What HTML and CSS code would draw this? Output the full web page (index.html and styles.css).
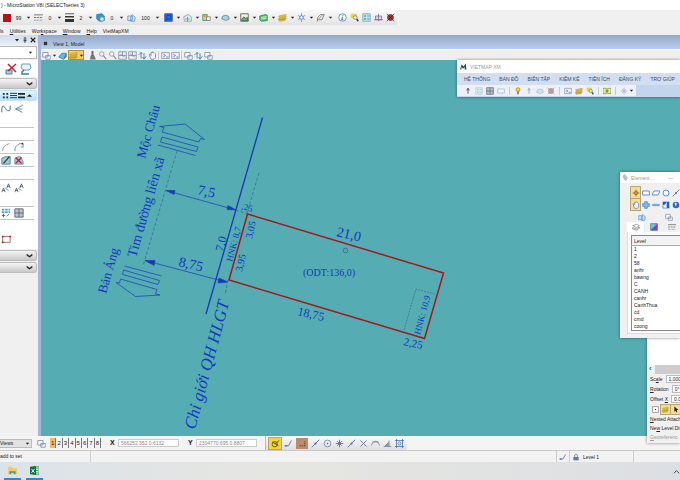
FILE: index.html
```
<!DOCTYPE html>
<html lang="vi">
<head>
<meta charset="utf-8">
<title>MicroStation V8i (SELECTseries 3)</title>
<link rel="stylesheet" href="styles.css">
</head>
<body>
<svg class="defs" aria-hidden="true">
  <symbol id="styl" viewBox="0 0 12 12"><path d="M0 2.500h12" stroke="#555"/><path d="M0 6h12" stroke="#555" stroke-dasharray="3 1"/><path d="M0 9.500h12" stroke="#555" stroke-dasharray="1 1"/></symbol>
  <symbol id="wt" viewBox="0 0 12 12"><path d="M0 1h12" stroke="#333"/><path d="M0 5h12" stroke="#333" stroke-width="2"/><path d="M0 10h12" stroke="#333" stroke-width="4"/></symbol>
  <symbol id="cube" viewBox="0 0 12 12"><path d="M1 2l7-1 3 3v6l-6 1-4-3z" fill="#3197c9" stroke="#25789f"/><circle cx="8" cy="8" r="3" fill="#d5eef8" stroke="#489"/></symbol>
  <symbol id="trans" viewBox="0 0 12 12"><path d="M1 4h6v6H1zM5 6l2-4 4 4-1 5H5z" fill="#cfe3f6" stroke="#5b8fc8"/></symbol>
  <symbol id="blue" viewBox="0 0 12 12"><path d="M1 1h10v10H1z" fill="#2c6ce0" stroke="#163f9e"/><path d="M4 3h5v5H4z" fill="none" stroke="#123f93"/><path d="M1 11l3-3" stroke="#123f93"/></symbol>
  <symbol id="sheet" viewBox="0 0 12 12"><path d="M1 5l6-3 4 3v6H2z" fill="#e3eef0" stroke="#7c9ba0"/><path d="M3 8h6M6 5v6" stroke="#2aa39a"/></symbol>
  <symbol id="models" viewBox="0 0 12 12"><path d="M1 2h6v8H1z" fill="#b6dba9" stroke="#4c8a56"/><path d="M6 5h5v5H6z" fill="#f4f4ef" stroke="#777"/><path d="M2 4h5" stroke="#e88b42" stroke-width="2"/></symbol>
  <symbol id="split" viewBox="0 0 12 12"><path d="M0 2h5v8H0zM7 2h5v8H7z" fill="#e9ef8a" stroke="#7f8a3a"/><path d="M4 6h4" stroke="#444"/></symbol>
  <symbol id="cloud" viewBox="0 0 12 12"><path d="M1 8q0-5 5-5t5 5l-4 2z" fill="#a9d4e2" stroke="#4d8297"/></symbol>
  <symbol id="pic" viewBox="0 0 12 12"><path d="M1 1h10v10H1z" fill="#f5f4d9" stroke="#444"/><path d="M2 9l3-4 2 2 3-1v4H2z" fill="#67ae68" stroke="#456"/></symbol>
  <symbol id="green" viewBox="0 0 12 12"><path d="M1 4l8-2 2 1v7l-8 1-2-2z" fill="#59c66c" stroke="#218047"/><path d="M3 6l7-1M3 8l7-1" stroke="#e7ffe5"/></symbol>
  <symbol id="layers" viewBox="0 0 12 12"><path d="M1 4l4-1 6-1-2 3-7 1zM1 7l8-1 2-2-2 4-8 1zM1 9l8-1 2-1-2 3-7 1z" fill="#e7c541" stroke="#a78d28" stroke-width=".7"/></symbol>
  <symbol id="leaf" viewBox="0 0 12 12"><path d="M1 4l6-2 4 2-4 3zM1 7l6 2 4-3v2l-4 3-6-2z" fill="#fff" stroke="#777"/></symbol>
  <symbol id="star" viewBox="0 0 12 12"><path d="M6 0v12M1 3l10 6M11 3L1 9" stroke="#5c9ec0"/><circle cx="6" cy="6" r="2.500" fill="#d9eef7" stroke="#3d78ad"/></symbol>
  <symbol id="draw" viewBox="0 0 12 12"><circle cx="5" cy="7" r="3.500" fill="none" stroke="#6b5a14" stroke-width="1.300"/><path d="M2 4l8 5M5 7l6-5" stroke="#6b5a14" stroke-width="1.300"/></symbol>
  <symbol id="pen" viewBox="0 0 12 12"><path d="M2 11V6l4-4h5L8 9H3" fill="#e1ece6" stroke="#587d72"/><path d="M1 11l8-9" stroke="#c56c60"/></symbol>
  <symbol id="clip" viewBox="0 0 12 12"><path d="M3 2l2-1 4 6-2 4-3-2-2-5z" fill="#ddd" stroke="#888"/><path d="M4 4l3 5" stroke="#888"/></symbol>
  <symbol id="info" viewBox="0 0 12 12"><circle cx="6" cy="6" r="5" fill="#f4faff" stroke="#4f80b7"/><path d="M6.500 2.500v1M6 5l-1 4h2" stroke="#2765b0" stroke-width="1.300" fill="none"/></symbol>
  <symbol id="find" viewBox="0 0 12 12"><path d="M1 1h8v6H1z" fill="#f0d23d"/><circle cx="7" cy="6" r="2.500" fill="#f3ecc1" stroke="#777"/><path d="M9 8l2 3" stroke="#345" stroke-width="2"/></symbol>
  <symbol id="list" viewBox="0 0 12 12"><path d="M1 1h10v10H1z" fill="#bfe2ec" stroke="#6fa7bb"/><path d="M3 3h2v2H3zM3 7h2v2H3z" fill="#35a15b"/><path d="M7 4h3M7 8h3" stroke="#477aaf"/></symbol>
  <symbol id="key" viewBox="0 0 12 12"><path d="M2 4h8v5H2z" fill="#dfd5ee" stroke="#7b6b9a"/><path d="M6 1v10M0 9h12" stroke="#7b6b9a"/></symbol>
  <symbol id="bug" viewBox="0 0 12 12"><circle cx="6" cy="6" r="4" fill="#a5333a" stroke="#444"/><path d="M1 1l10 10M11 1L1 11" stroke="#5b1a24"/></symbol>
  <symbol id="win" viewBox="0 0 12 12"><path d="M1 2h7v6H1zM5 6h6v5H5z" fill="#f6f9ff" stroke="#7c8698"/></symbol>
  <symbol id="ball" viewBox="0 0 12 12"><path d="M1 8l4-5h6v5l-4 3z" fill="#6db7d4" stroke="#3f7793"/><path d="M8 10l3-6" stroke="#2e6276"/></symbol>
  <symbol id="brush" viewBox="0 0 12 12"><path d="M5 0h2v6H5zM3 11l1-5h4l2 5z" fill="#777" stroke="#555" stroke-width=".5"/></symbol>
  <symbol id="zoom" viewBox="0 0 12 12"><circle cx="5" cy="4" r="3" fill="#edf4fb" stroke="#8093ad"/><path d="M7 6l4 5" stroke="#9b765e" stroke-width="1.500"/></symbol>
  <symbol id="fit" viewBox="0 0 12 12"><path d="M1 1h10v10H1zM1 6h10M6 1v6M3 4l6 4" fill="none" stroke="#77859b"/></symbol>
  <symbol id="rot" viewBox="0 0 12 12"><path d="M4 2v8M1 5l3-3 2 2M8 10V3M6 8l2 3 3-4" fill="none" stroke="#4580bd" stroke-width="1.200"/></symbol>
  <symbol id="hand" viewBox="0 0 12 12"><path d="M2 6V4l2 2V2h2V1l2 1 2 2v5l-2 2H4z" fill="#f4f6ff" stroke="#6074ac"/></symbol>
  <symbol id="prev" viewBox="0 0 12 12"><path d="M1 2h10v8H1z" fill="#eef2f8" stroke="#8490a4"/><path d="M3 4l3 2-3 2M7 8h3" fill="none" stroke="#536d97"/></symbol>
  <symbol id="x" viewBox="0 0 12 12"><path d="M1 7h6v4H1z" fill="#a9cbe0" stroke="#4f7fa6"/><path d="M3 1l8 8M11 1L3 8" stroke="#c3222c" stroke-width="1.500"/></symbol>
  <symbol id="delv" viewBox="0 0 12 12"><path d="M1 4l4-2h3l3 6v3H1z" fill="#a9c4d8" stroke="#6f8fa6"/><path d="M2 3l7 7M9 3L2 10" stroke="#b3222c" stroke-width="1.500"/></symbol>
  <symbol id="lasso" viewBox="0 0 12 12"><path d="M2 1h8l1 4-2 2H4L1 5z" fill="#eaf4fb" stroke="#6e9bc2"/><path d="M4 7L2 9v2h7" fill="none" stroke="#3f79a4" stroke-width="1.500"/></symbol>
  <symbol id="curve" viewBox="0 0 12 12"><path d="M1 10V5q1-5 4 0t6 2V2" fill="none" stroke="#587084" stroke-width="1.200"/></symbol>
  <symbol id="branch" viewBox="0 0 12 12"><path d="M11 1L2 6l8 4M2 6h8" fill="none" stroke="#5d8db3" stroke-width="1.200"/></symbol>
  <symbol id="arc" viewBox="0 0 12 12"><path d="M2 11q0-7 8-9" fill="none" stroke="#8b8b8b"/></symbol>
  <symbol id="arc2" viewBox="0 0 12 12"><path d="M1 11q0-7 6-9h4v4H8" fill="none" stroke="#777"/><circle cx="10" cy="2" r="1" fill="#333"/></symbol>
  <symbol id="edit" viewBox="0 0 12 12"><path d="M1 4l4-2h6v9H1z" fill="#a5c9dc" stroke="#527b92"/><path d="M3 10l7-8" stroke="#2c3c46" stroke-width="1.500"/></symbol>
  <symbol id="txt" viewBox="0 0 12 12"><path d="M1 11l2-5 2 5M2 9h3M7 6l2-5 2 5M7 4h3" fill="none" stroke="#555"/><path d="M5 6l4 3" stroke="#3d87bd"/></symbol>
  <symbol id="grid" viewBox="0 0 12 12"><path d="M1 1h10v10H1zM1 6h10M6 1v10" fill="#b9c1c9" stroke="#56616a"/></symbol>
  <symbol id="dots" viewBox="0 0 12 12"><path d="M1 2h10M1 5h10" stroke="#4ba4c9" stroke-width="2" stroke-dasharray="3 1"/><path d="M3 7v4M1 9h4M7 10l3-3" stroke="#456"/></symbol>
  <symbol id="poly" viewBox="0 0 12 12"><path d="M2 3h9v7H2z" fill="none" stroke="#8e5757"/><path d="M1 2h2v2H1zM10 2h2v2h-2zM1 9h2v2H1z" fill="#a22"/></symbol>
  <symbol id="line" viewBox="0 0 12 12"><path d="M1 11L11 1" stroke="#6279a8" stroke-width="1.300"/><circle cx="6" cy="6" r="1.500" fill="#58709e"/></symbol>
  <symbol id="hook" viewBox="0 0 12 12"><path d="M1 9h5l4-7" fill="none" stroke="#647ba5" stroke-width="1.300"/><path d="M1 8h3v2H1z" fill="#647ba5"/></symbol>
  <symbol id="keypt" viewBox="0 0 12 12"><path d="M2 9h7V3" fill="none" stroke="#6d4b3d" stroke-width="1.500" stroke-dasharray="2 1"/></symbol>
  <symbol id="circ" viewBox="0 0 12 12"><circle cx="6" cy="6" r="4.500" fill="none" stroke="#6279a8"/><circle cx="6" cy="6" r="1" fill="#435d8d"/></symbol>
  <symbol id="ring" viewBox="0 0 12 12"><circle cx="6" cy="6" r="4.500" fill="#fff" stroke="#4d80c3" stroke-width="1.300"/></symbol>
  <symbol id="cross" viewBox="0 0 12 12"><path d="M2 2l8 8M10 2l-8 8" stroke="#6c7a92" stroke-width="1.300"/></symbol>
  <symbol id="burst" viewBox="0 0 12 12"><path d="M6 1v10M1 6h10M3 3l6 6M9 3L3 9" stroke="#5b7097" stroke-width="1.200"/></symbol>
  <symbol id="bow" viewBox="0 0 12 12"><path d="M0 9l3-5q3-2 6 0l3 5M2 4h8" fill="none" stroke="#697b99"/></symbol>
  <symbol id="perp" viewBox="0 0 12 12"><path d="M1 10h10M8 10V2M3 9l4-4v4z" fill="#99a5b8" stroke="#697b99"/></symbol>
  <symbol id="frame" viewBox="0 0 12 12"><path d="M2 2h8v8H2z" fill="none" stroke="#496fb2"/><path d="M0 2h3M2 0v3M9 2h3M10 0v3M0 10h3M2 9v3M9 10h3M10 9v3" stroke="#496fb2"/><circle cx="6" cy="6" r="2" fill="none" stroke="#496fb2"/></symbol>
  <symbol id="point" viewBox="0 0 12 12"><path d="M1 1h10v10H1z" fill="#fff" stroke="#666"/><path d="M5 5h2v2H5z" fill="#333"/></symbol>
  <symbol id="box" viewBox="0 0 12 12"><path d="M1 3h10v6H1z" fill="#fff" stroke="#4d80c3" stroke-width="1.300"/></symbol>
  <symbol id="para" viewBox="0 0 12 12"><path d="M3 3h9L9 9H0z" fill="#fff" stroke="#4d80c3" stroke-width="1.300"/></symbol>
  <symbol id="plus" viewBox="0 0 12 12"><path d="M4 1h4v3h3v4H8v3H4V8H1V4h3z" fill="#88b8e6" stroke="#437ab5"/></symbol>
  <symbol id="pick" viewBox="0 0 12 12"><path d="M6 1v10M1 6h10" stroke="#a1681f" stroke-width="1.500"/><path d="M4 4h4v4H4z" fill="#e5a443" stroke="#8a5a22"/></symbol>
  <symbol id="minus" viewBox="0 0 12 12"><path d="M1 5h10v2H1z" fill="#9dc3e8" stroke="#5588bb"/></symbol>
  <symbol id="half" viewBox="0 0 12 12"><path d="M1 1h10v10H1z" fill="#1b61b8"/><path d="M2 10V6q4 0 4-4h1v8z" fill="#fff"/></symbol>
  <symbol id="globe" viewBox="0 0 12 12"><circle cx="6" cy="6" r="5" fill="#2b70bd"/><path d="M4 3q4-2 3 3L5 8z" fill="#c4e2f8"/></symbol>
  <symbol id="rain" viewBox="0 0 12 12"><path d="M1 1h10v10H1z" fill="#80a8f0" stroke="#376"/><path d="M1 11L11 1v10z" fill="#7b44c7"/><path d="M2 2h4v4H2z" fill="#63d49b"/></symbol>
  <symbol id="bulb" viewBox="0 0 12 12"><circle cx="6" cy="4" r="3" fill="#f5cf2c" stroke="#a08427"/><path d="M5 7h2v4H5z" fill="#555"/></symbol>
  <symbol id="arrow" viewBox="0 0 12 12"><path d="M6 10V2M4 5l2-3 2 3" fill="none" stroke="#335" stroke-width="1.200"/></symbol>
  <symbol id="cursor" viewBox="0 0 12 12"><path d="M4 1v9l2-2 2 3 1-1-1-3h3z" fill="#222"/></symbol>
  <symbol id="logo" viewBox="0 0 12 12"><path d="M0 11L3 2l3 4 4-5 1 10H8V7l-3 3-2-3-1 4z" fill="#17526c"/></symbol>
  <symbol id="lock" viewBox="0 0 12 12"><path d="M4 6V3q2-3 4 0v3" fill="none" stroke="#567"/><path d="M2 6h8v5H2z" fill="#667b92"/></symbol>
  <symbol id="folder" viewBox="0 0 12 12"><path d="M0 1h5l1 2h6v8H0z" fill="#f3cf5a"/><path d="M2 7h8v4H8V9H4v2H2z" fill="#3f8fc7"/></symbol>
  <symbol id="excel" viewBox="0 0 12 12"><path d="M5 1h7v10H5z" fill="#eef7f0" stroke="#2a8453"/><path d="M8 3h3M8 6h3M8 9h3" stroke="#2a8453"/><path d="M0 1l8-1v12l-8-1z" fill="#147042"/><path d="M2 4l4 5M6 4L2 9" stroke="#fff" stroke-width="1.200"/></symbol>
  <symbol id="dn" viewBox="0 0 6 6"><path d="M1 2h4L3 4.500z" fill="#222"/></symbol>
  <symbol id="chev" viewBox="0 0 8 8"><path d="M1 2.500l3 2 3-2v1.500L4 6 1 4z" fill="#222" stroke="#222" stroke-width=".5"/></symbol>
</svg>

<header class="title">) - MicroStation V8i (SELECTseries 3)</header>

<div class="attributes">
  <div class="strip">
    <button class="attr" aria-label="Color"><i class="swatch"></i><span>99</span><svg class="dn"><use href="#dn"/></svg></button>
    <button class="attr" aria-label="Line style"><svg><use href="#styl"/></svg><span>0</span><svg class="dn"><use href="#dn"/></svg></button>
    <button class="attr" aria-label="Line weight"><svg><use href="#wt"/></svg><span>2</span><svg class="dn"><use href="#dn"/></svg></button>
    <button class="attr" aria-label="Class"><svg><use href="#cube"/></svg><span>0</span><svg class="dn"><use href="#dn"/></svg></button>
    <button class="attr last" aria-label="Transparency"><svg><use href="#trans"/></svg><span>100</span><svg class="dn"><use href="#dn"/></svg></button>
    <button class="drop" aria-label="Models"><svg><use href="#blue"/></svg><svg class="dn"><use href="#dn"/></svg></button>
    <button class="drop" aria-label="References"><svg><use href="#sheet"/></svg><svg class="dn"><use href="#dn"/></svg></button>
    <button class="drop" aria-label="Raster"><svg><use href="#models"/></svg><svg class="dn"><use href="#dn"/></svg></button>
    <button class="drop" aria-label="Point clouds"><svg><use href="#cloud"/></svg><svg class="dn"><use href="#dn"/></svg></button>
    <button class="drop" aria-label="Images"><svg><use href="#pic"/></svg><svg class="dn"><use href="#dn"/></svg></button>
    <button class="drop" aria-label="Level manager"><svg><use href="#green"/></svg><svg class="dn"><use href="#dn"/></svg></button>
    <button class="drop" aria-label="Level display"><svg><use href="#layers"/></svg><svg class="dn"><use href="#dn"/></svg></button>
    <button class="drop" aria-label="Cells"><svg><use href="#star"/></svg><svg class="dn"><use href="#dn"/></svg></button>
    <button class="drop" aria-label="Auxiliary coordinates"><svg><use href="#pen"/></svg><svg class="dn"><use href="#dn"/></svg></button>
    <span class="tools wide">
      <button aria-label="Information"><svg><use href="#info"/></svg></button>
      <button aria-label="Find"><svg><use href="#find"/></svg></button>
      <button aria-label="Toggles"><svg><use href="#list"/></svg></button>
      <button aria-label="Key-in"><svg><use href="#key"/></svg></button>
      <button aria-label="Debug"><svg><use href="#bug"/></svg></button>
    </span>
  </div>
</div>

<nav class="menu">
  <a href="#">ls</a><a href="#"><u>U</u>tilities</a><a href="#">Wor<u>k</u>space</a><a href="#"><u>W</u>indow</a><a href="#"><u>H</u>elp</a><a href="#">VietMapXM</a>
</nav>

<main class="work">
  <aside class="tasks">
    <div class="tasks-head"><svg class="dn"><use href="#dn"/></svg><svg viewBox="0 0 6 8"><path d="M2 1h2v4H2zM1 5h4M3 5v3" fill="none" stroke="#333"/></svg><svg viewBox="0 0 8 8"><path d="M1 1l6 6M7 1L1 7" stroke="#222" stroke-width="1.500"/></svg></div>
    <button class="combo" aria-label="Task"><svg class="dn"><use href="#dn"/></svg></button>
    <div class="row main-row"><svg><use href="#x"/></svg><svg><use href="#lasso"/></svg></div>
    <button class="fold" aria-label="Tasks"><svg><use href="#chev"/></svg></button>
    <div class="fold open"><svg viewBox="0 0 8 8"><path d="M1 1h2v2H1zM5 1h2v2H5zM1 5h2v2H1zM5 5h2v2H5z" fill="#222"/></svg><svg viewBox="0 0 8 8"><path d="M0 1.500h8M0 4h8M0 6.500h8" stroke="#222"/></svg><svg viewBox="0 0 8 8"><path d="M0 1h8v2H0zM0 5h8v2H0z" fill="#222"/></svg><svg viewBox="0 0 8 8"><path d="M1 5.500l3-3 3 3z" fill="#222"/></svg></div>
    <div class="rows">
      <div class="row tall"><svg><use href="#curve"/></svg><svg><use href="#branch"/></svg></div>
      <div class="row"></div>
      <div class="row"><svg><use href="#arc"/></svg><svg><use href="#arc2"/></svg></div>
      <div class="row"><svg><use href="#edit"/></svg><svg><use href="#delv"/></svg></div>
      <div class="row"></div>
      <div class="row tall"><svg><use href="#txt"/></svg><svg><use href="#txt"/></svg></div>
      <div class="row"><svg><use href="#dots"/></svg><svg><use href="#grid"/></svg></div>
      <div class="row tall end"><svg><use href="#poly"/></svg></div>
    </div>
    <button class="fold" aria-label="Mesh"><svg><use href="#chev"/></svg></button>
    <button class="fold" aria-label="Surface"><svg><use href="#chev"/></svg></button>
  </aside>

  <section class="view">
    <div class="view-title"><svg viewBox="0 0 6 6"><path d="M1 1h4v4H1z" fill="#333"/></svg>View 1, Model</div>
    <div class="view-tools">
      <button aria-label="View attributes"><svg><use href="#win"/></svg></button><svg class="dn"><use href="#dn"/></svg>
      <button aria-label="Display style"><svg><use href="#ball"/></svg></button>
      <button class="hot" aria-label="Adjust"><svg><use href="#layers"/></svg><svg class="dn"><use href="#dn"/></svg></button>
      <span class="tools">
        <button aria-label="Update"><svg><use href="#brush"/></svg></button>
        <button aria-label="Zoom in"><svg><use href="#zoom"/></svg></button>
        <button aria-label="Zoom out"><svg><use href="#zoom"/></svg></button>
        <button aria-label="Window area"><svg><use href="#fit"/></svg></button>
        <button aria-label="Fit view"><svg><use href="#fit"/></svg></button>
        <button aria-label="Rotate"><svg><use href="#rot"/></svg></button>
        <button aria-label="Pan"><svg><use href="#hand"/></svg></button>
      </span>
      <span class="tools">
        <button aria-label="Previous"><svg><use href="#prev"/></svg></button>
        <button aria-label="Next"><svg><use href="#prev"/></svg></button>
      </span>
      <span class="tools">
        <button aria-label="Copy view"><svg><use href="#win"/></svg></button>
        <button aria-label="Clip"><svg><use href="#rot"/></svg></button>
        <button aria-label="Mask"><svg><use href="#win"/></svg></button>
      </span>
    </div>
    <div class="canvas">
      <svg class="plan" viewBox="41 60 639 376" preserveAspectRatio="xMinYMin slice">
        <g class="ink">
          <path class="strong" d="M262.500 117.500L206 314"/>
          <path d="M166 190.500L236 210M145 260.500L226 282"/>
          <path class="fill" d="M166 190.500l9 0-1 4zM236 210l-9-.5 1-4zM145 260.500l10 0-1 5zM228 282l-10 1 1-5z"/>
          <path d="M159.500 126.500L185 124l19.500 15.500-4-1-1.500 3.500L162 132l2-4.500zM162 137l36 10-1.500 4.500-36-9.500zM158 145l37.500 10.500"/>
          <path d="M124.500 266l37 10M123.500 270l36 10.500-1.500 4-35.500-10zM120.500 279l36.500 10.500-1.500 4.500 4.500 1-24.500 1.500-19.500-14 3.500 .5z"/>
          <path class="dash" d="M177 151L143 266M259 173L247 213M236 210l11 4M228 280l-3 15"/>
        </g>
        <path class="hatch" d="M404 330L416 289l19 5"/>
        <path class="parcel" d="M247.500 214L443.500 273 424.500 338.500 229 280z"/>
        <circle class="hatch-circle" cx="345.500" cy="250.500" r="2.300"/>
        <g class="labels">
          <text class="s13" transform="translate(145 159) rotate(-74)">Mộc Châu</text>
          <text class="s14" transform="translate(136 258) rotate(-74)">Tim đường liên xã</text>
          <text class="s13" transform="translate(106 294) rotate(-74)">Bản Ảng</text>
          <text class="s17" transform="translate(195 430) rotate(-75)">Chỉ giới QH HLGT</text>
          <text class="s14" transform="translate(197 194) rotate(13)">7,5</text>
          <text class="s14" transform="translate(178 266) rotate(13)">8,75</text>
          <text class="s14" transform="translate(336 236) rotate(13)">21,0</text>
          <text class="s12" transform="translate(297 315) rotate(13)">18,75</text>
          <text class="s11" transform="translate(403 345) rotate(12)">2,25</text>
          <text class="s10" transform="translate(303 276)">(ODT:136,0)</text>
          <text class="s9" transform="translate(420 335) rotate(-75)">HNK: 10,9</text>
          <text class="s9" transform="translate(232 262) rotate(-75)">HNK: 8,7</text>
          <text class="s12" transform="translate(223 252) rotate(-75)">7,0</text>
          <text class="s10" transform="translate(252 239) rotate(-77)">3,05</text>
          <text class="s10" transform="translate(242 272) rotate(-77)">3,95</text>
          <text class="s9" transform="translate(241 209) rotate(14)">,25</text>
        </g>
      </svg>
    </div>
  </section>
</main>

<div class="snap-bar">
  <button class="views">Views<svg class="dn"><use href="#dn"/></svg></button>
  <button class="cascade" aria-label="View groups"><svg><use href="#win"/></svg></button>
  <div class="nums"><button class="on">1</button><button>2</button><button>3</button><button>4</button><button>5</button><button>6</button><button>7</button><button>8</button></div>
  <label class="coord"><b>X</b><input value="566252.352 0.6132"></label>
  <label class="coord"><b>Y</b><input value="2304770.695 0.8807"></label>
  <span class="tools wide snaps">
    <button class="lit" aria-label="AccuDraw"><svg><use href="#draw"/></svg></button>
    <button aria-label="Nearest"><svg><use href="#hook"/></svg></button>
    <button class="brown" aria-label="Keypoint"><svg><use href="#keypt"/></svg></button>
    <button aria-label="Midpoint"><svg><use href="#line"/></svg></button>
    <button aria-label="Center"><svg><use href="#circ"/></svg></button>
    <button aria-label="Origin"><svg><use href="#burst"/></svg></button>
    <button aria-label="Bisector"><svg><use href="#line"/></svg></button>
    <button aria-label="Intersection"><svg><use href="#cross"/></svg></button>
    <button aria-label="Tangent"><svg><use href="#bow"/></svg></button>
    <button aria-label="Perpendicular"><svg><use href="#perp"/></svg></button>
    <button aria-label="Multi-snap"><svg><use href="#frame"/></svg></button>
  </span>
</div>

<footer class="status">
  <span class="msg">add to set</span>
  <span class="space"></span>
  <span class="snap"><svg><use href="#hook"/></svg></span>
  <span class="level"><svg><use href="#lock"/></svg>Level 1</span>
  <span class="rest"></span>
</footer>

<div class="taskbar">
  <button aria-label="Explorer"><svg><use href="#folder"/></svg></button>
  <button aria-label="Excel"><svg><use href="#excel"/></svg></button>
  <svg class="tray" viewBox="0 0 8 8"><path d="M1 6l3-3 3 3" fill="none" stroke="#333"/></svg>
</div>

<section class="window vietmap">
  <div class="vm-title"><svg><use href="#logo"/></svg>VIETMAP XM</div>
  <nav class="vm-menu"><a href="#">HỆ THỐNG</a><a href="#">BẢN ĐỒ</a><a href="#">BIÊN TẬP</a><a href="#">KIỂM KÊ</a><a href="#">TIỆN ÍCH</a><a href="#">ĐĂNG KÝ</a><a href="#">TRỢ GIÚP</a></nav>
  <div class="vm-bar">
    <div class="vm-tools">
      <span class="tools wide"><button aria-label="Up"><svg><use href="#arrow"/></svg></button><button class="dim" aria-label="Sheet"><svg><use href="#list"/></svg></button><button aria-label="Table"><svg><use href="#grid"/></svg></button><button class="dim" aria-label="Page"><svg><use href="#box"/></svg></button></span>
      <span class="tools wide"><button aria-label="Light"><svg><use href="#bulb"/></svg></button><button class="dim" aria-label="Help"><svg><use href="#arrow"/></svg></button><button class="dim" aria-label="World"><svg><use href="#cloud"/></svg></button><button class="dim" aria-label="Delete"><svg><use href="#bug"/></svg></button></span>
      <span class="tools wide"><button aria-label="Label"><svg><use href="#prev"/></svg></button><button aria-label="Layers"><svg><use href="#layers"/></svg></button><button aria-label="Search"><svg><use href="#find"/></svg></button></span>
      <span class="tools"><button aria-label="Split"><svg><use href="#split"/></svg></button></span>
      <span class="tools"><button class="dim" aria-label="Points"><svg><use href="#burst"/></svg></button><svg class="dn"><use href="#dn"/></svg></span>
    </div>
  </div>
</section>

<section class="window raster">
  <div class="blank"></div>
  <div class="scroll">‹</div>
  <label><span>Sc<u>a</u>le</span><input value="1.000"></label>
  <label><span><u>R</u>otation</span><input value="0°"></label>
  <label><span>Offset <u>X</u></span><input value="0.0"></label>
  <div class="toggles"><button aria-label="Point"><svg><use href="#point"/></svg></button><button class="lit" aria-label="Display"><svg><use href="#layers"/></svg></button><button class="lit" aria-label="Locate"><svg><use href="#cursor"/></svg></button></div>
  <p><u>N</u>ested Attach</p>
  <p>Ne<u>w</u> Level Dis</p>
  <p class="off"><u>G</u>eoreferenc</p>
</section>

<section class="window element">
  <div class="el-title"><svg><use href="#clip"/></svg>Element ...<span>—</span></div>
  <div class="el-tools">
    <button class="lit" aria-label="Individual"><svg><use href="#pick"/></svg></button><button aria-label="Block"><svg><use href="#box"/></svg></button><button aria-label="Shape"><svg><use href="#para"/></svg></button><button aria-label="Circle"><svg><use href="#ring"/></svg></button><button aria-label="Line"><svg><use href="#line"/></svg></button>
    <button class="lit" aria-label="New"><svg><use href="#hand"/></svg></button><button aria-label="Add"><svg><use href="#plus"/></svg></button><button aria-label="Subtract"><svg><use href="#minus"/></svg></button><button aria-label="Invert"><svg><use href="#half"/></svg></button><button aria-label="All"><svg><use href="#globe"/></svg></button>
  </div>
  <div class="tabs upper"><button aria-label="Class"><svg><use href="#trans"/></svg></button><button aria-label="Type"><svg><use href="#win"/></svg></button></div>
  <div class="tabs"><button class="cur" aria-label="Level"><svg><use href="#leaf"/></svg></button><button aria-label="Color"><svg><use href="#rain"/></svg></button><button aria-label="Style"><svg><use href="#styl"/></svg></button></div>
  <div class="sheet">
    <table>
      <thead><tr><th>Level</th></tr></thead>
      <tbody>
        <tr><td>1</td></tr><tr><td>2</td></tr><tr><td>58</td></tr><tr><td>anhr</td></tr><tr><td>bawng</td></tr><tr><td>C</td></tr><tr><td>CANH</td></tr><tr><td>canhr</td></tr><tr><td>CanhThua</td></tr><tr><td>cd</td></tr><tr><td>cmd</td></tr><tr><td>coong</td></tr>
      </tbody>
    </table>
  </div>
</section>
</body>
</html>
```
FILE: styles.css
```
* { box-sizing: border-box; }
html, body { height: 100%; }
body {
  margin: 0;
  display: flex;
  flex-direction: column;
  position: relative;
  overflow: hidden;
  background: #f0f0f0;
  color: #222;
  font: 5px/8px "Liberation Sans", sans-serif;
}
button, input {
  font: inherit;
  color: inherit;
  margin: 0;
  padding: 0;
  border: 0;
  background: none;
}
button { display: flex; align-items: center; justify-content: center; }
a { color: inherit; text-decoration: none; }
p { margin: 0; }
svg { display: block; width: 9px; height: 9px; flex: none; }
.defs { position: absolute; width: 0; height: 0; }
svg.dn { width: 5px; height: 5px; }
.lit { background: #f6dc92; outline: 1px solid #b9a57a; }
.dim { opacity: .45; }

.title { height: 10px; line-height: 11px; padding-left: 1px; background: #fff; }

.attributes { display: flex; height: 15px; background: #f0f0f0; }
.strip {
  display: flex;
  align-items: center;
  padding: 0 2px 0 3px;
  background: linear-gradient(#fafafa, #e2e2e2);
}
.attr { width: 31px; gap: 2px; justify-content: flex-start; }
.attr span { flex: 1; text-align: center; }
.attr .dn { margin-right: 3px; }
.attr.last { width: 36px; }
.swatch { width: 8px; height: 8px; background: #b5121b; }
.drop { width: 19px; gap: 3px; }
.tools { display: flex; align-items: center; gap: 1px; }
.tools.wide { gap: 3px; }
.strip .tools { padding-left: 4px; }

.menu { display: flex; gap: 6px; height: 10px; line-height: 12px; }

.work { flex: 1; display: flex; min-height: 0; }
.tasks {
  width: 38px;
  display: flex;
  flex-direction: column;
  background: #f0f0f0;
}
.tasks-head {
  display: flex;
  justify-content: flex-end;
  align-items: center;
  gap: 2px;
  height: 10px;
  padding-right: 2px;
  background: linear-gradient(#cfdcf0, #e9eef7);
}
.tasks-head svg { width: 6px; height: 6px; }
.combo {
  height: 13px;
  margin: 1px 1px 1px 0;
  justify-content: flex-end;
  padding-right: 3px;
  background: #fff;
  border: 1px solid #b8b8b8;
  border-left: 0;
}
.row { display: flex; align-items: center; gap: 3px; height: 13px; padding-left: 1px; border-bottom: 1px solid #c4c4c4; }
.row svg { width: 10px; height: 10px; }
.main-row { height: 17px; padding-left: 5px; border: 0; background: #fff; }
.main-row svg { width: 12px; height: 12px; }
.row.tall { height: 27px; align-items: flex-start; padding-top: 3px; }
.row.end { border: 0; height: 29px; padding-top: 14px; }
.rows { background: #fff; padding-right: 4px; }
.fold {
  height: 11px;
  margin: 1px 1px 0 0;
  justify-content: flex-end;
  padding-right: 3px;
  border: 1px solid #bcbcbc;
  border-left: 0;
  border-radius: 0 3px 3px 0;
  background: linear-gradient(#f4f4f4, #c9c9c9);
}
.fold svg { width: 7px; height: 7px; }
.fold.open {
  display: flex;
  align-items: center;
  gap: 1px;
  border-color: #c8e2ef;
  background: linear-gradient(#e2f6ff, #afe0f7);
}

.view { flex: 1; min-width: 0; display: flex; flex-direction: column; border-left: 3px solid #a9b6dc; }
.view-title {
  display: flex;
  align-items: center;
  gap: 5px;
  height: 14px;
  padding: 3px 0 0 2px;
  background: linear-gradient(#97a8c7, #b7cfee);
}
.view-title svg { width: 5px; height: 5px; }
.view-tools {
  display: flex;
  align-items: center;
  height: 11px;
  gap: 1px;
  padding-left: 1px;
  background: #efefef;
  border-top: 1px solid #fff;
}
.view-tools .tools { padding-left: 1px; }
.view-tools .hot + .tools { padding-left: 3px; }
.view-tools .tools + .tools { padding-left: 2px; border-left: 1px solid #ccc; }
.view-tools .hot { gap: 1px; width: 16px; height: 10px; background: #f9cb68; border: 1px solid #b48b3c; }
.canvas { flex: 1; min-height: 0; background: #55adb3; }
.plan { width: 100%; height: 100%; }
.ink { fill: none; stroke: #1f48b4; stroke-width: .8; }
.ink .strong { stroke: #1738b8; stroke-width: 1.3; }
.ink .fill { fill: #1738b8; }
.ink .dash { stroke: #2f6b9c; stroke-dasharray: 3 2; }
.hatch { fill: none; stroke: #3d7480; stroke-width: .8; stroke-dasharray: 2 1; }
.hatch-circle { fill: none; stroke: #33686f; stroke-width: .8; }
.parcel { fill: none; stroke: #a3191d; stroke-width: 1.5; }
.labels { font-family: "Liberation Serif", serif; fill: #1437bd; }
.s9 { font-size: 9px; }
.s10 { font-size: 10px; }
.s11 { font-size: 11px; }
.s12 { font-size: 12px; }
.s13 { font-size: 13px; }
.s14 { font-size: 14px; }
.s17 { font-size: 17px; font-style: italic; }

.snap-bar { display: flex; align-items: center; height: 15px; background: #f4f4f4; border-bottom: 1px solid #c9c9c9; }
.views { width: 32px; height: 9px; justify-content: space-between; padding-right: 1px; background: #e2e2e2; border: 1px solid #bbb; border-left: 0; }
.cascade { width: 18px; }
.nums { display: flex; width: 51px; font-size: 6px; }
.nums button { flex: 1; height: 10px; border-right: 1px solid #777; }
.nums .on { background: #f3b765; }
.coord { display: flex; align-items: center; gap: 3px; padding-left: 9px; }
.coord b { width: 5px; font-size: 7px; color: #111; }
.coord input { width: 61px; height: 8px; padding-left: 2px; background: #fff; border: 1px solid #ccc; color: #888; }
.snaps { margin-left: 8px; padding: 0 3px; height: 14px; border-left: 1px solid #bbb; background: linear-gradient(#fafafa, #dedede); }
.snaps button { height: 11px; }
.snaps .lit { width: 12px; background: #f3d33f; }
.brown { width: 12px; background: #b98c6d; }

.status { display: flex; height: 11px; line-height: 10px; background: #f2f2f2; }
.status span { border-right: 1px solid #cfcfcf; }
.status .msg { width: 91px; }
.status .space { flex: 1; }
.status .snap, .status .level { display: flex; align-items: center; padding-left: 2px; }
.status .snap { width: 13px; }
.status svg { width: 8px; height: 8px; }
.status .level { width: 64px; gap: 3px; }
.status .rest { width: 46px; border: 0; }

.taskbar { display: flex; height: 18px; gap: 5px; padding-left: 4px; background: linear-gradient(90deg, #dbe3ea, #e6e6e1 40%, #dcdfe3); }
.taskbar button { width: 17px; border-bottom: 2px solid #2e86de; }
.taskbar .tray { width: 7px; height: 7px; margin: 6px 0 0 auto; }

.window { position: absolute; right: 0; background: #f0f0f0; box-shadow: 0 0 3px #0007; overflow: hidden; }
.vietmap { left: 457px; top: 60px; color: #3c4a6c; }
.vm-title { display: flex; align-items: center; gap: 3px; height: 13px; padding-left: 3px; background: #fff; color: #999; }
.vm-title svg { width: 7px; height: 7px; }
.vm-menu { display: flex; gap: 9px; height: 12px; line-height: 12px; padding-left: 7px; background: #d3dff0; white-space: nowrap; }
.vm-bar { height: 12px; background: #c3d5ec; }
.vm-tools { display: inline-flex; align-items: center; height: 11px; gap: 4px; padding: 0 2px 0 7px; background: #edf1f7; vertical-align: top; }
.vm-tools .tools + .tools { border-left: 1px solid #c4cbd8; padding-left: 4px; }
.vm-tools svg:not(.dn) { width: 8px; height: 8px; }

.raster { left: 647px; top: 330px; padding-bottom: 1px; }
.blank { height: 35px; background: #fff; }
.scroll { height: 9px; padding-left: 2px; font-size: 8px; background: linear-gradient(90deg, #f0f0f0 8px, #cdcdcd 8px); }
.raster label { display: flex; align-items: center; gap: 3px; height: 10px; padding-left: 3px; white-space: nowrap; }
.raster input { flex: 1; min-width: 0; height: 8px; padding-left: 2px; border: 1px solid #bbb; border-right: 0; background: #fff; }
.toggles { display: flex; gap: 1px; height: 11px; padding: 1px 0 0 4px; }
.toggles button { width: 9px; height: 9px; }
.toggles svg { width: 7px; height: 7px; }
.raster p { height: 9px; line-height: 9px; padding-left: 3px; white-space: nowrap; }
.raster .off { color: #999; }

.element { left: 620px; top: 172px; padding-bottom: 4px; }
.el-title { display: flex; align-items: center; gap: 2px; height: 11px; padding-left: 2px; background: #fff; color: #999; }
.el-title svg { width: 7px; height: 7px; }
.el-title span { margin-left: 11px; }
.el-tools { display: grid; grid-template-columns: repeat(5, 9px); grid-auto-rows: 11px; column-gap: 1px; row-gap: 1px; padding: 4px 0 2px 11px; }
.el-tools svg { width: 8px; height: 8px; }
.tabs { display: flex; height: 10px; padding-left: 7px; gap: 1px; }
.tabs button { width: 19px; }
.tabs.upper { padding-left: 12px; gap: 8px; }
.tabs svg { width: 8px; height: 8px; }
.tabs .cur { background: #fff; }
.sheet { margin-left: 7px; padding: 3px 0 2px 3px; background: #fafafa; border: 1px solid #ddd; border-width: 0 0 1px 1px; }
table { width: 100%; border-collapse: collapse; background: #fff; border: 1px solid #888; border-right: 0; }
th { height: 10px; padding: 0 0 0 2px; text-align: left; font-weight: normal; background: #f3f3f3; border-bottom: 1px solid #aaa; }
td { padding: 0 0 0 2px; line-height: 7px; height: 7px; }
```
